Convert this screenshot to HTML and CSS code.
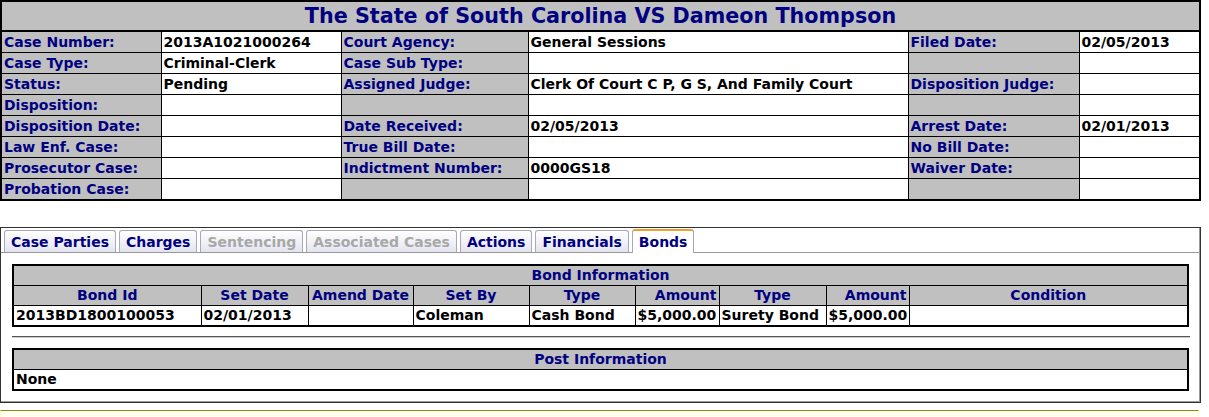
FILE: index.html
```html
<!DOCTYPE html>
<html lang="en">
<head>
    <meta charset="UTF-8">
    <title>Case Details</title>
    <link rel="stylesheet" href="styles.css">
</head>
<body>
    <table class="case">
        <colgroup>
            <col style="width:160px"><col style="width:180px"><col style="width:187px">
            <col style="width:380px"><col style="width:171px"><col style="width:121px">
        </colgroup>
        <tr><th class="title" colspan="6">The State of South Carolina VS Dameon Thompson</th></tr>
        <tr><th>Case Number:</th><td>2013A1021000264</td><th>Court Agency:</th><td>General Sessions</td><th>Filed Date:</th><td>02/05/2013</td></tr>
        <tr><th>Case Type:</th><td>Criminal-Clerk</td><th>Case Sub Type:</th><td></td><th></th><td></td></tr>
        <tr><th>Status:</th><td>Pending</td><th>Assigned Judge:</th><td>Clerk Of Court C P, G S, And Family Court</td><th>Disposition Judge:</th><td></td></tr>
        <tr><th>Disposition:</th><td></td><th></th><td></td><th></th><td></td></tr>
        <tr><th>Disposition Date:</th><td></td><th>Date Received:</th><td>02/05/2013</td><th>Arrest Date:</th><td>02/01/2013</td></tr>
        <tr><th>Law Enf. Case:</th><td></td><th>True Bill Date:</th><td></td><th>No Bill Date:</th><td></td></tr>
        <tr><th>Prosecutor Case:</th><td></td><th>Indictment Number:</th><td>0000GS18</td><th>Waiver Date:</th><td></td></tr>
        <tr><th>Probation Case:</th><td></td><th></th><td></td><th></th><td></td></tr>
    </table>

    <div class="tabs">
        <ul class="tab-bar">
            <li class="tab">Case Parties</li>
            <li class="tab">Charges</li>
            <li class="tab disabled">Sentencing</li>
            <li class="tab disabled">Associated Cases</li>
            <li class="tab">Actions</li>
            <li class="tab">Financials</li>
            <li class="tab active">Bonds</li>
        </ul>
        <div class="tab-panel">
            <table class="grid">
                <colgroup>
                    <col style="width:188px"><col style="width:107px"><col style="width:105px">
                    <col style="width:116px"><col style="width:106px"><col style="width:84px">
                    <col style="width:107px"><col style="width:83px"><col>
                </colgroup>
                <tr><th colspan="9">Bond Information</th></tr>
                <tr>
                    <th>Bond Id</th><th>Set Date</th><th>Amend Date</th><th>Set By</th><th>Type</th>
                    <th class="num">Amount</th><th>Type</th><th class="num">Amount</th><th>Condition</th>
                </tr>
                <tr>
                    <td>2013BD1800100053</td><td>02/01/2013</td><td></td><td>Coleman</td><td>Cash Bond</td>
                    <td>$5,000.00</td><td>Surety Bond</td><td>$5,000.00</td><td></td>
                </tr>
            </table>
            <hr class="divider">
            <table class="grid">
                <tr><th>Post Information</th></tr>
                <tr><td>None</td></tr>
            </table>
        </div>
    </div>

    <div class="notice"></div>
</body>
</html>
```

FILE: styles.css
```css
body {
    margin: 0;
    font-family: "DejaVu Sans", Verdana, sans-serif;
    font-size: 14px;
    font-weight: bold;
    background-color: white;
    color: black;
}
table {
    border-collapse: collapse;
    table-layout: fixed;
}
th, td {
    padding: 0 2px;
    white-space: nowrap;
    overflow: hidden;
    line-height: 17px;
}
.case {
    width: 1199px;
    border: 2px solid black;
}
.case th, .case td {
    height: 20px;
    border: 1px solid black;
    text-align: left;
}
.case th {
    background-color: #c0c0c0;
    color: #000080;
}
.case th.title {
    height: 28px;
    font-size: 20.7px;
    line-height: 24px;
    text-align: center;
    border-bottom: 2px solid black;
}
.tabs {
    margin-top: 26px;
    width: 1199px;
    border: 1px solid #333;
    box-shadow: inset -1px -1px 0 #999;
    padding-bottom: 11px;
}
.tab-bar {
    list-style: none;
    margin: 0;
    padding: 2px 0 0 3px;
    display: flex;
    gap: 3px;
    border-bottom: 1px solid #999;
    height: 22px;
}
.tab {
    height: 21px;
    padding: 0 6px;
    line-height: 22px;
    text-align: center;
    color: #000080;
    border: 1px solid #a8a8b8;
    border-bottom: none;
    border-radius: 3px 3px 0 0;
    background: linear-gradient(#ffffff, #e4e4f0);
}
.tab.disabled {
    color: #a8a8a8;
}
.tab.active {
    background: white;
    border-top: 2px solid #f0a030;
    height: 22px;
    margin-top: -1px;
}
.tab-panel {
    padding: 11px 10px 0 11px;
}
.grid {
    width: 1177px;
    border: 2px solid black;
}
.grid th, .grid td {
    height: 19px;
    border: 1px solid black;
}
.grid th {
    background-color: #c0c0c0;
    color: #000080;
    text-align: center;
}
.grid th.num {
    text-align: right;
}
.grid td {
    text-align: left;
}
.divider {
    margin: 9px 0 10px;
    border: none;
    border-top: 1px solid #555;
    border-bottom: 1px solid #ccc;
}
.notice {
    margin-top: 7px;
    width: 1197px;
    height: 20px;
    border: 1px solid #ffffc0;
    border-top: 1px solid #8b8b1a;
    background-color: #fffff0;
}
```
